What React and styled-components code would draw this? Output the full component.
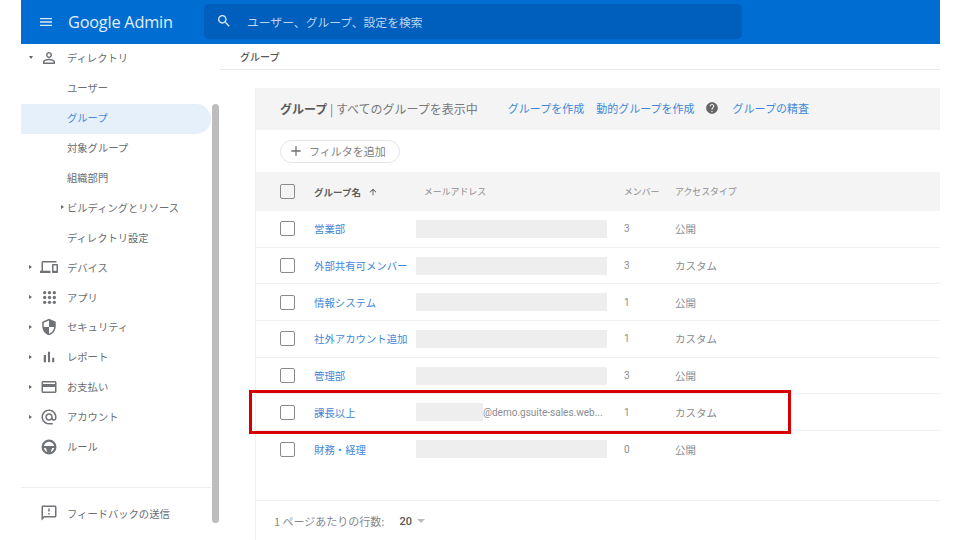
import React from 'react'
import styled, { createGlobalStyle } from 'styled-components'

const GlobalStyle = createGlobalStyle`
  html, body {
    margin: 0;
    background: #fff;
    font-family: "Roboto", "Noto Sans CJK JP", sans-serif;
  }
`

const Page = styled.div`
  position: relative;
  width: 960px;
  height: 540px;
  overflow: hidden;
  box-sizing: border-box;
  padding: 0 20px 0 21px;
  background: #fff;
`

const TopBar = styled.header`
  display: flex;
  align-items: center;
  height: 44px;
  padding-left: 17px;
  background: #006dd3;
  color: #fff;
`

const Wordmark = styled.div`
  width: 136px;
  margin-left: 14px;
  font-family: "Open Sans", sans-serif;
  font-size: 16.3px;
  letter-spacing: -0.2px;
  color: #e4eefa;
`

const Search = styled.div`
  display: flex;
  align-items: center;
  gap: 15px;
  width: 526px;
  height: 35px;
  margin-top: -2px;
  padding-left: 12px;
  border-radius: 5px;
  background: #005ebd;
  font-family: "Noto Sans CJK JP", sans-serif;
  font-size: 11.8px;
  color: #bcd5f0;
`

const Body = styled.div`
  display: flex;
  height: 496px;
`

const Side = styled.nav`
  width: 199px;
  flex: none;
  font-family: "Noto Sans CJK JP", sans-serif;
  font-size: 10.3px;
  color: #6a6d71;
`

const NavRow = styled.div`
  display: flex;
  align-items: center;
  height: 29.9px;
  width: 190px;
  box-sizing: border-box;
  padding-bottom: 2px;
  border-radius: 0 15px 15px 0;
  padding-left: ${({ $sub }) => ($sub ? '46px' : '6px')};
  ${({ $active }) => $active && `background: #e6f0fb; color: #4a8ad8;`}
`

const Caret = styled.span`
  width: 0;
  height: 0;
  flex: none;
  border-style: solid;
  ${({ $open }) =>
    $open
      ? `border-width: 3px 2.5px 0 2.5px; border-color: #666 transparent transparent transparent;`
      : `border-width: 2.5px 0 2.5px 3px; border-color: transparent transparent transparent #666;`}
`

const CaretSlot = styled.span`
  display: flex;
  justify-content: center;
  width: 7px;
  flex: none;
`

const IconSlot = styled.span`
  display: flex;
  justify-content: center;
  width: 18px;
  margin: 0 9px 0 6px;
  flex: none;
`

const SubCaret = styled.span`
  display: flex;
  width: 3px;
  margin-left: -6px;
  margin-right: 3px;
`

const SideFoot = styled.div`
  margin-top: 25px;
  padding-top: 11px;
  border-top: 1px solid #eee;
  width: 190px;
`

const Main = styled.main`
  flex: 1;
  min-width: 0;
`

const Crumb = styled.div`
  height: 25px;
  padding-left: 20px;
  border-bottom: 1px solid #e8e8e8;
  font-family: "Noto Sans CJK JP", sans-serif;
  font-size: 10px;
  font-weight: 500;
  line-height: 25px;
  color: #555;
`

const Card = styled.section`
  margin: 18px 0 0 35px;
  border-left: 1px solid #f0f0f0;
  font-family: "Noto Sans CJK JP", sans-serif;
`

const CardHead = styled.div`
  display: flex;
  align-items: center;
  height: 42px;
  box-sizing: border-box;
  padding: 0 0 2px 24px;
  background: #f4f4f4;
  font-size: 12px;
  color: #77797c;
`

const Strong = styled.b`
  font-weight: 700;
  color: #5a5a5a;
`

const LinkText = styled.span`
  font-size: 11px;
  color: #3f88d8;
  margin-left: ${({ $gap }) => $gap}px;
`

const HelpSlot = styled.span`
  display: flex;
  margin-left: 10px;
`

const FilterRow = styled.div`
  display: flex;
  align-items: center;
  height: 42px;
  padding-left: 24px;
`

const Chip = styled.div`
  display: flex;
  align-items: center;
  gap: 5px;
  width: 120px;
  height: 23px;
  box-sizing: border-box;
  padding-left: 7px;
  border: 1px solid #e4e4e4;
  border-radius: 12px;
  font-size: 11px;
  color: #808285;
`

const Row = styled.div`
  display: grid;
  grid-template-columns: 34px 102px 191px 17px 51px 1fr;
  align-items: center;
  height: ${({ $head }) => ($head ? '39px' : '36.7px')};
  box-sizing: border-box;
  padding-left: 24px;
  font-size: 10.5px;
  color: #8b8d90;
  ${({ $head }) =>
    $head ? `background: #f4f4f4; font-size: 8.9px;` : `border-bottom: 1px solid #f0f0f0;`}
  ${({ $last }) => $last && `border-bottom: none;`}
`

const Box = styled.span`
  display: block;
  width: 15px;
  height: 15px;
  box-sizing: border-box;
  border: 1.5px solid #8a8a8a;
  border-radius: 2px;
`

const Name = styled.span`
  font-size: 10.4px;
  color: #3f88d8;
  white-space: nowrap;
`

const HeadName = styled.span`
  display: flex;
  align-items: center;
  gap: 7px;
  font-size: 9.5px;
  font-weight: 700;
  color: #5d5d5d;
`

const HeadEmail = styled.span`
  padding-left: 8px;
`

const HeadMembers = styled.span`
  grid-column: 5;
  white-space: nowrap;
`

const Mask = styled.span`
  display: block;
  height: 18px;
  background: #eeeeee;
`

const MaskedEmail = styled.span`
  display: flex;
  align-items: center;
`

const MaskPart = styled(Mask)`
  width: 67px;
  flex: none;
`

const EmailTail = styled.span`
  font-family: "Roboto", sans-serif;
  font-size: 10px;
  color: #8b8d90;
  white-space: nowrap;
`

const Count = styled.span`
  grid-column: 5;
  font-family: "Roboto", sans-serif;
  font-size: 10px;
`

const Empty = styled.div`
  height: 32px;
  border-bottom: 1px solid #eee;
`

const Pager = styled.div`
  display: flex;
  align-items: center;
  height: 41px;
  padding-left: 18px;
  font-size: 11px;
  color: #85878a;
`

const PagerValue = styled.span`
  margin-left: 15px;
  font-family: "Roboto", sans-serif;
  font-weight: 500;
  color: #555;
`

const PagerCaret = styled.span`
  margin-left: 5px;
  border-style: solid;
  border-width: 4px 4px 0 4px;
  border-color: #bbb transparent transparent transparent;
`

const ScrollThumb = styled.div`
  position: absolute;
  left: 212px;
  top: 104px;
  width: 7px;
  height: 419px;
  border-radius: 4px;
  background: #bdbdbd;
`

const RedBox = styled.div`
  position: absolute;
  left: 249px;
  top: 390px;
  width: 542px;
  height: 44px;
  box-sizing: border-box;
  border: 3px solid #d60000;
`

const paths = {
  menu: 'M3 18h18v-2H3v2zm0-5h18v-2H3v2zm0-7v2h18V6H3z',
  search:
    'M15.5 14h-.79l-.28-.27C15.41 12.59 16 11.11 16 9.5 16 5.91 13.09 3 9.5 3S3 5.91 3 9.5 5.91 16 9.5 16c1.61 0 3.09-.59 4.23-1.57l.27.28v.79l5 4.99L20.49 19l-4.99-5zm-6 0C7.01 14 5 11.99 5 9.5S7.01 5 9.5 5 14 7.01 14 9.5 11.99 14 9.5 14z',
  person:
    'M12 5.9c1.16 0 2.1.94 2.1 2.1s-.94 2.1-2.1 2.1S9.9 9.16 9.9 8s.94-2.1 2.1-2.1m0 9c2.97 0 6.1 1.46 6.1 2.1v1.1H5.9V17c0-.64 3.13-2.1 6.1-2.1M12 4C9.79 4 8 5.79 8 8s1.79 4 4 4 4-1.79 4-4-1.79-4-4-4zm0 9c-2.67 0-8 1.34-8 4v3h16v-3c0-2.66-5.33-4-8-4z',
  devices:
    'M4 6h18V4H4c-1.1 0-2 .9-2 2v11H0v3h14v-3H4V6zm19 2h-6c-.55 0-1 .45-1 1v10c0 .55.45 1 1 1h6c.55 0 1-.45 1-1V9c0-.55-.45-1-1-1zm-1 9h-4v-7h4v7z',
  security:
    'M12 1L3 5v6c0 5.55 3.84 10.74 9 12 5.16-1.26 9-6.45 9-12V5l-9-4zm0 10.99h7c-.53 4.12-3.28 7.79-7 8.94V12H5V6.3l7-3.11v8.8z',
  chart: 'M5 9.2h3V19H5zM10.6 5h2.8v14h-2.8zm5.6 8H19v6h-2.8z',
  card: 'M20 4H4c-1.11 0-1.99.89-1.99 2L2 18c0 1.11.89 2 2 2h16c1.11 0 2-.89 2-2V6c0-1.11-.89-2-2-2zm0 14H4v-6h16v6zm0-10H4V6h16v2z',
  at: 'M12 2C6.48 2 2 6.48 2 12s4.48 10 10 10h5v-2h-5c-4.34 0-8-3.66-8-8s3.66-8 8-8 8 3.66 8 8v1.43c0 .79-.71 1.57-1.5 1.57s-1.5-.78-1.5-1.57V12c0-2.76-2.24-5-5-5s-5 2.24-5 5 2.24 5 5 5c1.38 0 2.64-.56 3.54-1.47.65.89 1.77 1.47 2.96 1.47 1.97 0 3.5-1.6 3.5-3.57V12c0-5.52-4.48-10-10-10zm0 13c-1.66 0-3-1.34-3-3s1.34-3 3-3 3 1.34 3 3-1.34 3-3 3z',
  feedback:
    'M20 2H4c-1.1 0-1.99.9-1.99 2L2 22l4-4h14c1.1 0 2-.9 2-2V4c0-1.1-.9-2-2-2zm0 14H5.17L4 17.17V4h16v12zm-9-4h2v2h-2zm0-6h2v4h-2z',
  help: 'M12 2C6.48 2 2 6.48 2 12s4.48 10 10 10 10-4.48 10-10S17.52 2 12 2zm1 17h-2v-2h2v2zm2.07-7.75l-.9.92C13.45 12.9 13 13.5 13 15h-2v-.5c0-1.1.45-2.1 1.17-2.83l1.24-1.26c.37-.36.59-.86.59-1.41 0-1.1-.9-2-2-2s-2 .9-2 2H8c0-2.21 1.79-4 4-4s4 1.79 4 4c0 .88-.36 1.68-.93 2.25z',
  up: 'M4 12l1.41 1.41L11 7.83V20h2V7.83l5.58 5.59L20 12l-8-8-8 8z',
  plus: 'M19 13h-6v6h-2v-6H5v-2h6V5h2v6h6v2z'
}

const Icon = ({ name, size = 18, color = '#6f7276' }) => (
  <svg width={size} height={size} viewBox="0 0 24 24" fill={color}>
    <path d={paths[name]} />
  </svg>
)

const AppsIcon = () => (
  <svg width="13" height="13" viewBox="0 0 14 14" fill="#6f7276">
    {[1.8, 7, 12.2].map(x =>
      [1.8, 7, 12.2].map(y => <circle key={`${x}-${y}`} cx={x} cy={y} r="1.8" />)
    )}
  </svg>
)

const WheelIcon = () => (
  <svg width="18" height="18" viewBox="0 0 24 24" fill="#6f7276">
    <circle cx="12" cy="12" r="8.5" fill="none" stroke="#6f7276" strokeWidth="3" />
    <path d="M4 10.5h16v2.5l-4 .5-2 6h-4l-2-6-4-.5z" />
  </svg>
)

const navItems = [
  { label: 'デバイス', icon: <Icon name="devices" /> },
  { label: 'アプリ', icon: <AppsIcon /> },
  { label: 'セキュリティ', icon: <Icon name="security" /> },
  { label: 'レポート', icon: <Icon name="chart" /> },
  { label: 'お支払い', icon: <Icon name="card" /> },
  { label: 'アカウント', icon: <Icon name="at" /> }
]

const groups = [
  { name: '営業部', members: 3, access: '公開' },
  { name: '外部共有可メンバー', members: 3, access: 'カスタム' },
  { name: '情報システム', members: 1, access: '公開' },
  { name: '社外アカウント追加', members: 1, access: 'カスタム' },
  { name: '管理部', members: 3, access: '公開' },
  { name: '課長以上', members: 1, access: 'カスタム', email: '@demo.gsuite-sales.web...' },
  { name: '財務・経理', members: 0, access: '公開' }
]

export default function App() {
  return (
    <Page>
      <GlobalStyle />
      <TopBar>
        <Icon name="menu" size={16} color="#dce9f8" />
        <Wordmark>Google Admin</Wordmark>
        <Search>
          <Icon name="search" size={16} color="#dce9f8" />
          ユーザー、グループ、設定を検索
        </Search>
      </TopBar>
      <Body>
        <Side>
          <NavRow>
            <CaretSlot>
              <Caret $open />
            </CaretSlot>
            <IconSlot>
              <Icon name="person" />
            </IconSlot>
            ディレクトリ
          </NavRow>
          <NavRow $sub>ユーザー</NavRow>
          <NavRow $sub $active>
            グループ
          </NavRow>
          <NavRow $sub>対象グループ</NavRow>
          <NavRow $sub>組織部門</NavRow>
          <NavRow $sub>
            <SubCaret>
              <Caret />
            </SubCaret>
            ビルディングとリソース
          </NavRow>
          <NavRow $sub>ディレクトリ設定</NavRow>
          {navItems.map(item => (
            <NavRow key={item.label}>
              <CaretSlot>
                <Caret />
              </CaretSlot>
              <IconSlot>{item.icon}</IconSlot>
              {item.label}
            </NavRow>
          ))}
          <NavRow>
            <CaretSlot />
            <IconSlot>
              <WheelIcon />
            </IconSlot>
            ルール
          </NavRow>
          <SideFoot>
            <NavRow>
              <CaretSlot />
              <IconSlot>
                <Icon name="feedback" />
              </IconSlot>
              フィードバックの送信
            </NavRow>
          </SideFoot>
        </Side>
        <Main>
          <Crumb>グループ</Crumb>
          <Card>
            <CardHead>
              <Strong>グループ</Strong>&nbsp;| すべてのグループを表示中
              <LinkText $gap={30}>グループを作成</LinkText>
              <LinkText $gap={12}>動的グループを作成</LinkText>
              <HelpSlot>
                <Icon name="help" size={14} color="#666" />
              </HelpSlot>
              <LinkText $gap={14}>グループの精査</LinkText>
            </CardHead>
            <FilterRow>
              <Chip>
                <Icon name="plus" size={16} />
                フィルタを追加
              </Chip>
            </FilterRow>
            <Row $head>
              <Box />
              <HeadName>
                グループ名
                <Icon name="up" size={10} color="#555" />
              </HeadName>
              <HeadEmail>メールアドレス</HeadEmail>
              <HeadMembers>メンバー</HeadMembers>
              <span>アクセスタイプ</span>
            </Row>
            {groups.map((group, i) => (
              <Row key={group.name} $last={i === groups.length - 1}>
                <Box />
                <Name>{group.name}</Name>
                {group.email ? (
                  <MaskedEmail>
                    <MaskPart />
                    <EmailTail>{group.email}</EmailTail>
                  </MaskedEmail>
                ) : (
                  <Mask />
                )}
                <Count>{group.members}</Count>
                <span>{group.access}</span>
              </Row>
            ))}
            <Empty />
            <Pager>
              1 ページあたりの行数:
              <PagerValue>20</PagerValue>
              <PagerCaret />
            </Pager>
          </Card>
        </Main>
      </Body>
      <ScrollThumb />
      <RedBox />
    </Page>
  )
}
